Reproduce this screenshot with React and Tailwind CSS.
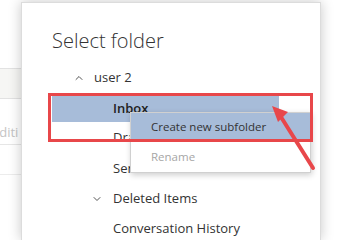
import { ChevronUp, ChevronDown } from 'lucide-react';

const font = { fontFamily: '"Open Sans", "Noto Sans", sans-serif' };

function TreeRow({ label, chevron, className = 'h-[31px] pl-[91px]' }) {
  return (
    <div className={`flex items-center ${className}`}>
      {chevron === 'up' && <ChevronUp size={12} strokeWidth={2} className="text-[#555] mr-[9px] -ml-[21px]" />}
      {chevron === 'down' && <ChevronDown size={12} strokeWidth={2} className="text-[#555] mr-[10px] -ml-[22px]" />}
      <span className="text-[13px] text-[#333]">{label}</span>
    </div>
  );
}

function ContextMenu() {
  return (
    <div className="absolute left-[108px] top-[109px] w-[181px] bg-white border border-[#d0d0d0] shadow-[1px_2px_6px_rgba(0,0,0,0.2)] text-[11.5px]">
      <div className="h-[28px] bg-[#a7bcd9] flex items-center pl-[20px] text-[#333]">Create new subfolder</div>
      <div className="h-[31px] flex items-center pl-[20px] text-[#a6a6a6]">Rename</div>
    </div>
  );
}

export default function App() {
  return (
    <div className="w-[359px] h-[240px] relative overflow-hidden bg-white flex" style={font}>
      {/* page behind the dialog */}
      <div className="w-[21px] shrink-0 flex flex-col overflow-hidden">
        <div className="h-[68px]" />
        <div className="h-[31px] border-t border-b border-[#e2e2e2] bg-[#f6f6f4]" />
        <div className="h-[46px] border-b border-[#e6e6e6] pt-[27px] text-[13px] leading-none text-[#c4c4c4] -ml-[17px] whitespace-nowrap">Additi</div>
        <div className="h-[30px] border-b border-[#ececec]" />
      </div>

      {/* dialog */}
      <div className="relative z-10 w-[300px] shrink-0 mt-[2px] bg-white border-t border-l border-r border-[#dcdcdc] shadow-[0_0_12px_rgba(0,0,0,0.22)]">
        <div className="pl-[30px] pt-[28px] text-[20px] font-light text-[#333] leading-none h-[58px]">Select folder</div>
        <TreeRow label="user 2" chevron="up" className="h-[34px] pl-[72px]" />
        <div className="ml-[30px] h-[27px] flex items-center bg-[#a7bcd9] w-[227px]">
          <span className="pl-[61px] text-[13px] font-semibold text-[#222]">Inbox</span>
        </div>
        <TreeRow label="Drafts" />
        <TreeRow label="Sent Items" />
        <TreeRow label="Deleted Items" chevron="down" className="h-[30px] pl-[91px]" />
        <TreeRow label="Conversation History" className="h-[30px] pl-[91px]" />
        <ContextMenu />
      </div>

      {/* annotation */}
      <div className="absolute z-50 left-[48px] top-[93px] w-[265px] h-[49px] border-[3px] border-[#e8474a]" />
      <svg className="absolute z-50 left-0 top-0" width="359" height="240" viewBox="0 0 359 240">
        <line x1="313" y1="168" x2="281" y2="117" stroke="#e8474a" strokeWidth="4" strokeLinecap="round" />
        <polygon points="272,106 288,112 278,122" fill="#e8474a" />
      </svg>
    </div>
  );
}
